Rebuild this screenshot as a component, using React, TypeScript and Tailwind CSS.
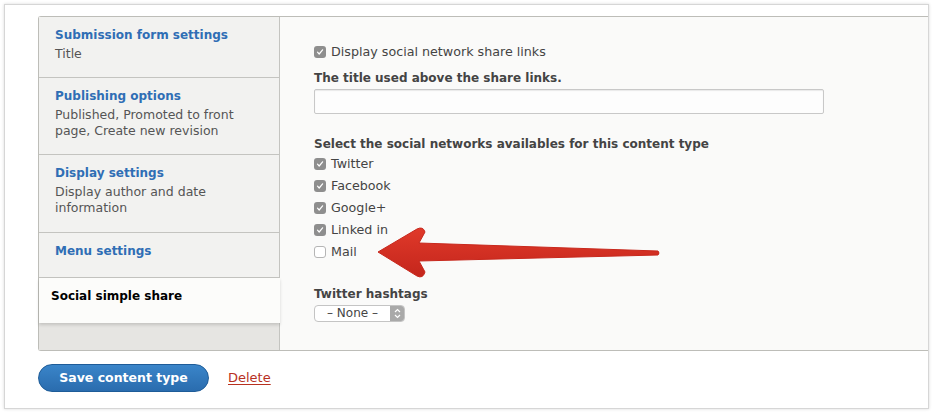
import React from 'react'

const font = { fontFamily: '"DejaVu Sans", Verdana, sans-serif' }

function Check({ checked }: { checked: boolean }) {
  return checked ? (
    <span className="inline-flex h-[12px] w-[12px] items-center justify-center rounded-[3px] bg-[#8e8e8e]">
      <svg width="8" height="8" viewBox="0 0 8 8">
        <path d="M1.5 4.2 L3.2 6 L6.6 1.8" fill="none" stroke="#fff" strokeWidth="1.2" strokeLinecap="round" strokeLinejoin="round" />
      </svg>
    </span>
  ) : (
    <span className="inline-block h-[12px] w-[12px] rounded-[3px] border border-[#b5b5b5] bg-white" />
  )
}

function TabItem({ title, desc, h }: { title: string; desc?: string[]; h: string }) {
  return (
    <div className={`${h} border-b border-[#c4c4c0] bg-[#f2f2f0] px-[16px] pt-[10px]`}>
      <div className="text-[12px] font-bold leading-[16px] text-[#2f6eb5]">{title}</div>
      {desc && (
        <div className="mt-[3px] text-[12.5px] leading-[16px] text-[#555]">
          {desc.map((d) => (
            <div key={d}>{d}</div>
          ))}
        </div>
      )}
    </div>
  )
}

export default function App() {
  const networks = [
    ['Twitter', true],
    ['Facebook', true],
    ['Google+', true],
    ['Linked in', true],
    ['Mail', false],
  ] as const

  return (
    <div className="h-[413px] w-[933px] bg-white p-[4px]" style={font}>
      <div className="relative h-[405px] w-[925px] border border-[#d6d6d6] bg-white pl-[33px] pt-[11px] shadow-[0_0_3px_rgba(0,0,0,0.15)]">
        <div className="flex h-[335px] rounded-tl-[3px] rounded-bl-[3px] border-y border-l border-[#bdbdb8]">
          <div className="flex w-[241px] shrink-0 flex-col border-r border-[#c4c4c0] bg-[#e6e5e2]">
            <TabItem title="Submission form settings" desc={['Title']} h="h-[61px]" />
            <TabItem title="Publishing options" desc={['Published, Promoted to front', 'page, Create new revision']} h="h-[77px]" />
            <TabItem title="Display settings" desc={['Display author and date', 'information']} h="h-[78px]" />
            <TabItem title="Menu settings" h="h-[45px]" />
            <div className="relative -mr-[1px] h-[45px] bg-[#fcfcfa] px-[12px] pt-[10px] text-[12px] font-bold leading-[16px] text-black shadow-[0_2px_3px_rgba(0,0,0,0.15)]">
              Social simple share
            </div>
          </div>
          <div className="flex-1 bg-[#fafaf9] pl-[34px] pt-[27px] text-[12.7px] text-[#444]">
            <div className="flex items-center gap-[5px] leading-[16px]">
              <Check checked />
              <span>Display social network share links</span>
            </div>
            <div className="mt-[10px] text-[12px] font-bold leading-[16px] text-[#444]">The title used above the share links.</div>
            <div className="mt-[3px] h-[25px] w-[510px] rounded-[2px] border border-[#c8c8c8] bg-[#fdfdfd] shadow-[inset_0_1px_1px_rgba(0,0,0,0.08)]" />
            <div className="mt-[22px] text-[12px] font-bold leading-[16px]">Select the social networks availables for this content type</div>
            <div className="mt-[1px] flex flex-col">
              {networks.map(([name, on]) => (
                <div key={name} className="flex h-[22px] items-center gap-[5px]">
                  <Check checked={on} />
                  <span>{name}</span>
                </div>
              ))}
            </div>
            <div className="mt-[23px] text-[12px] font-bold leading-[16px]">Twitter hashtags</div>
            <div className="mt-[3px] flex h-[17px] w-[91px] items-center overflow-hidden rounded-[4px] border border-[#c4c4c4] bg-white text-[12px]">
              <span className="flex-1 text-center leading-[15px]">– None –</span>
              <span className="flex h-full w-[14px] items-center justify-center bg-[#a9a9a9]">
                <svg width="7" height="11" viewBox="0 0 7 11">
                  <path d="M1 4 L3.5 1.5 L6 4 M1 7 L3.5 9.5 L6 7" fill="none" stroke="#fff" strokeWidth="1.2" />
                </svg>
              </span>
            </div>
          </div>
        </div>
        <div className="mt-[13px] flex items-center gap-[19px]">
          <button className="h-[28px] w-[171px] rounded-full border border-[#1e5c98] bg-gradient-to-b from-[#3a85c9] to-[#2a6cae] text-[12.5px] font-bold text-white">
            Save content type
          </button>
          <a className="text-[13px] text-[#b8311f] underline underline-offset-2">Delete</a>
        </div>
        <svg className="absolute left-[368px] top-[221px]" width="290" height="54" viewBox="0 0 290 54">
          <defs>
            <linearGradient id="ar" x1="0" y1="0" x2="0" y2="1">
              <stop offset="0" stopColor="#e0392a" />
              <stop offset="1" stopColor="#c4261c" />
            </linearGradient>
          </defs>
          <path
            d="M5 26 L44 3 Q50 0 52 6 L46 17 L285 25 Q287 27 285 29 L46 35 L52 46 Q50 53 44 50 Z"
            fill="url(#ar)"
            stroke="#c7281d"
            strokeWidth="1"
            strokeLinejoin="round"
          />
        </svg>
      </div>
    </div>
  )
}
